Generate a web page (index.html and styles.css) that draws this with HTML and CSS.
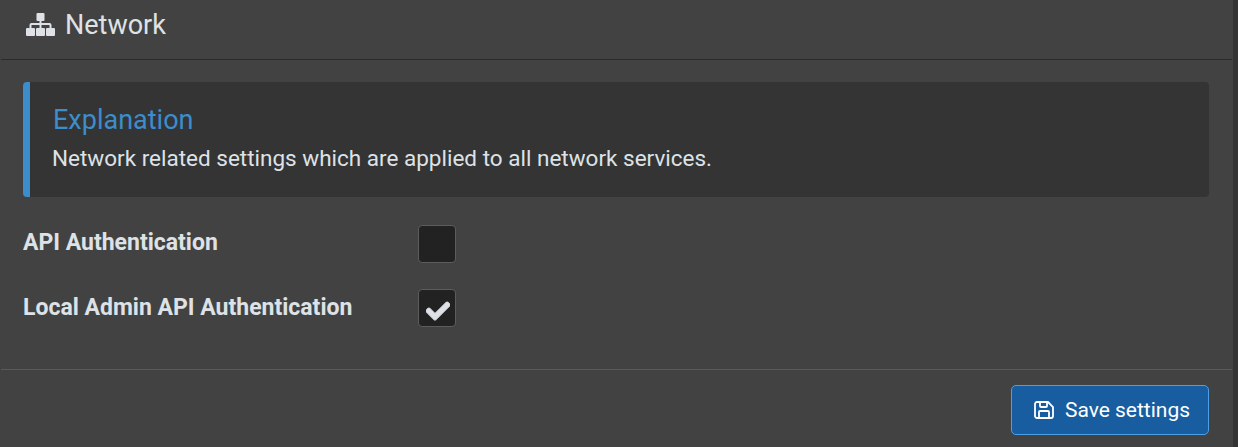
FILE: index.html
```html
<!DOCTYPE html>
<html lang="en">
<head>
    <meta charset="UTF-8" />
    <title>Network</title>
    <link rel="stylesheet" href="styles.css">
</head>
<body>
    <div class="card">
        <div class="card-header">
            <svg class="icon-sitemap" viewBox="0 0 29 23">
                <path class="lines" d="M14.5 8v7M4.5 15v-3a1 1 0 0 1 1-1h18a1 1 0 0 1 1 1v3"/>
                <rect x="10.5" width="8" height="8" rx="1"/>
                <rect y="15" width="9" height="8" rx="1"/>
                <rect x="10" y="15" width="9" height="8" rx="1"/>
                <rect x="20" y="15" width="9" height="8" rx="1"/>
            </svg>
            <h3>Network</h3>
        </div>

        <div class="card-body">
            <div class="callout">
                <h5>Explanation</h5>
                <p>Network related settings which are applied to all network services.</p>
            </div>

            <div class="form-row">
                <label>API Authentication</label>
                <span class="checkbox"></span>
            </div>
            <div class="form-row">
                <label>Local Admin API Authentication</label>
                <span class="checkbox">
                    <svg class="icon-check" viewBox="0 0 512 512"><path d="M173.898 439.404l-166.4-166.4c-9.997-9.997-9.997-26.206 0-36.204l36.203-36.204c9.997-9.998 26.207-9.998 36.204 0L192 312.69 432.095 72.596c9.997-9.997 26.207-9.997 36.204 0l36.203 36.204c9.997 9.997 9.997 26.206 0 36.204l-294.4 294.401c-9.998 9.997-26.207 9.997-36.204-.001z"/></svg>
                </span>
            </div>
        </div>

        <div class="card-footer">
            <button type="button" class="btn-save">
                <svg class="icon-save" viewBox="0 0 20 18">
                    <path d="M1 3a2 2 0 0 1 2-2h11l5 5v9a2 2 0 0 1-2 2H3a2 2 0 0 1-2-2z"/>
                    <path d="M5 17v-6a1 1 0 0 1 1-1h8a1 1 0 0 1 1 1v6"/>
                    <path d="M6 1v4a1 1 0 0 0 1 1h5a1 1 0 0 0 1-1V1"/>
                </svg>
                Save settings
            </button>
        </div>
    </div>
</body>
</html>
```

FILE: styles.css
```css
:root {
    --card: #424242;
    --edge: #343434;
    --text: #dee2e6;
    --blue: #3c8dcb;
}

html, body {
    height: 100%;
}

body {
    margin: 0;
    background-color: var(--edge);
    color: var(--text);
    font-family: Roboto, "Liberation Sans", sans-serif;
    overflow: hidden;
}

.card {
    width: 1233px;
    height: 447px;
    background-color: var(--card);
    display: flex;
    flex-direction: column;
}

.card-header {
    height: 59px;
    flex: none;
    margin-left: 1px;
    margin-right: 1px;
    padding: 0 22px;
    border-bottom: 1px solid #2b2b2b;
    display: flex;
    align-items: flex-start;
}

.icon-sitemap {
    width: 29px;
    height: 23px;
    margin-top: 13px;
    margin-left: 3px;
    fill: var(--text);
}

.icon-sitemap .lines {
    fill: none;
    stroke: var(--text);
    stroke-width: 2;
}

h3 {
    margin: 10px 0 0 10px;
    font-size: 27px;
    font-weight: 400;
    line-height: 30px;
}

.card-body {
    padding: 22px 24px 0 23px;
    height: 309px;
    flex: none;
    box-sizing: border-box;
}

.callout {
    height: 115px;
    box-sizing: border-box;
    padding: 23px 22px 0 22px;
    background-color: #343434;
    border-left: 7px solid var(--blue);
    border-radius: 4px;
    margin-bottom: 28px;
}

h5 {
    margin: 0 0 0 1px;
    color: var(--blue);
    font-size: 27px;
    font-weight: 400;
    line-height: 30px;
}

.callout p {
    margin: 8px 0 0;
    font-size: 22.5px;
    line-height: 30px;
}

.form-row {
    display: flex;
    height: 38px;
    margin-bottom: 26px;
}

label {
    width: 395px;
    font-size: 23px;
    font-weight: 700;
    line-height: 36px;
}

.form-row + .form-row label {
    line-height: 38px;
}

.checkbox {
    width: 38px;
    height: 38px;
    box-sizing: border-box;
    background-color: #222222;
    border: 1px solid #5c5c5c;
    border-radius: 4px;
    display: flex;
    align-items: center;
    justify-content: center;
}

.icon-check {
    width: 24px;
    height: 24px;
    margin: 5px 0 0 2px;
    fill: var(--text);
    stroke: var(--text);
    stroke-width: 24;
}

.card-footer {
    margin: 0 1px;
    padding: 15px 23px 0 0;
    border-top: 1px solid #5a5a5a;
    display: flex;
    justify-content: flex-end;
}

.btn-save {
    width: 198px;
    height: 50px;
    padding: 0 0 0 4px;
    display: flex;
    align-items: center;
    justify-content: center;
    gap: 11px;
    background-color: #175da0;
    border: 1px solid #4d9fe8;
    border-radius: 5px;
    color: #ffffff;
    font-family: inherit;
    font-size: 21px;
}

.icon-save {
    width: 20px;
    height: 18px;
    fill: none;
    stroke: #ffffff;
    stroke-width: 1.8;
}
```
